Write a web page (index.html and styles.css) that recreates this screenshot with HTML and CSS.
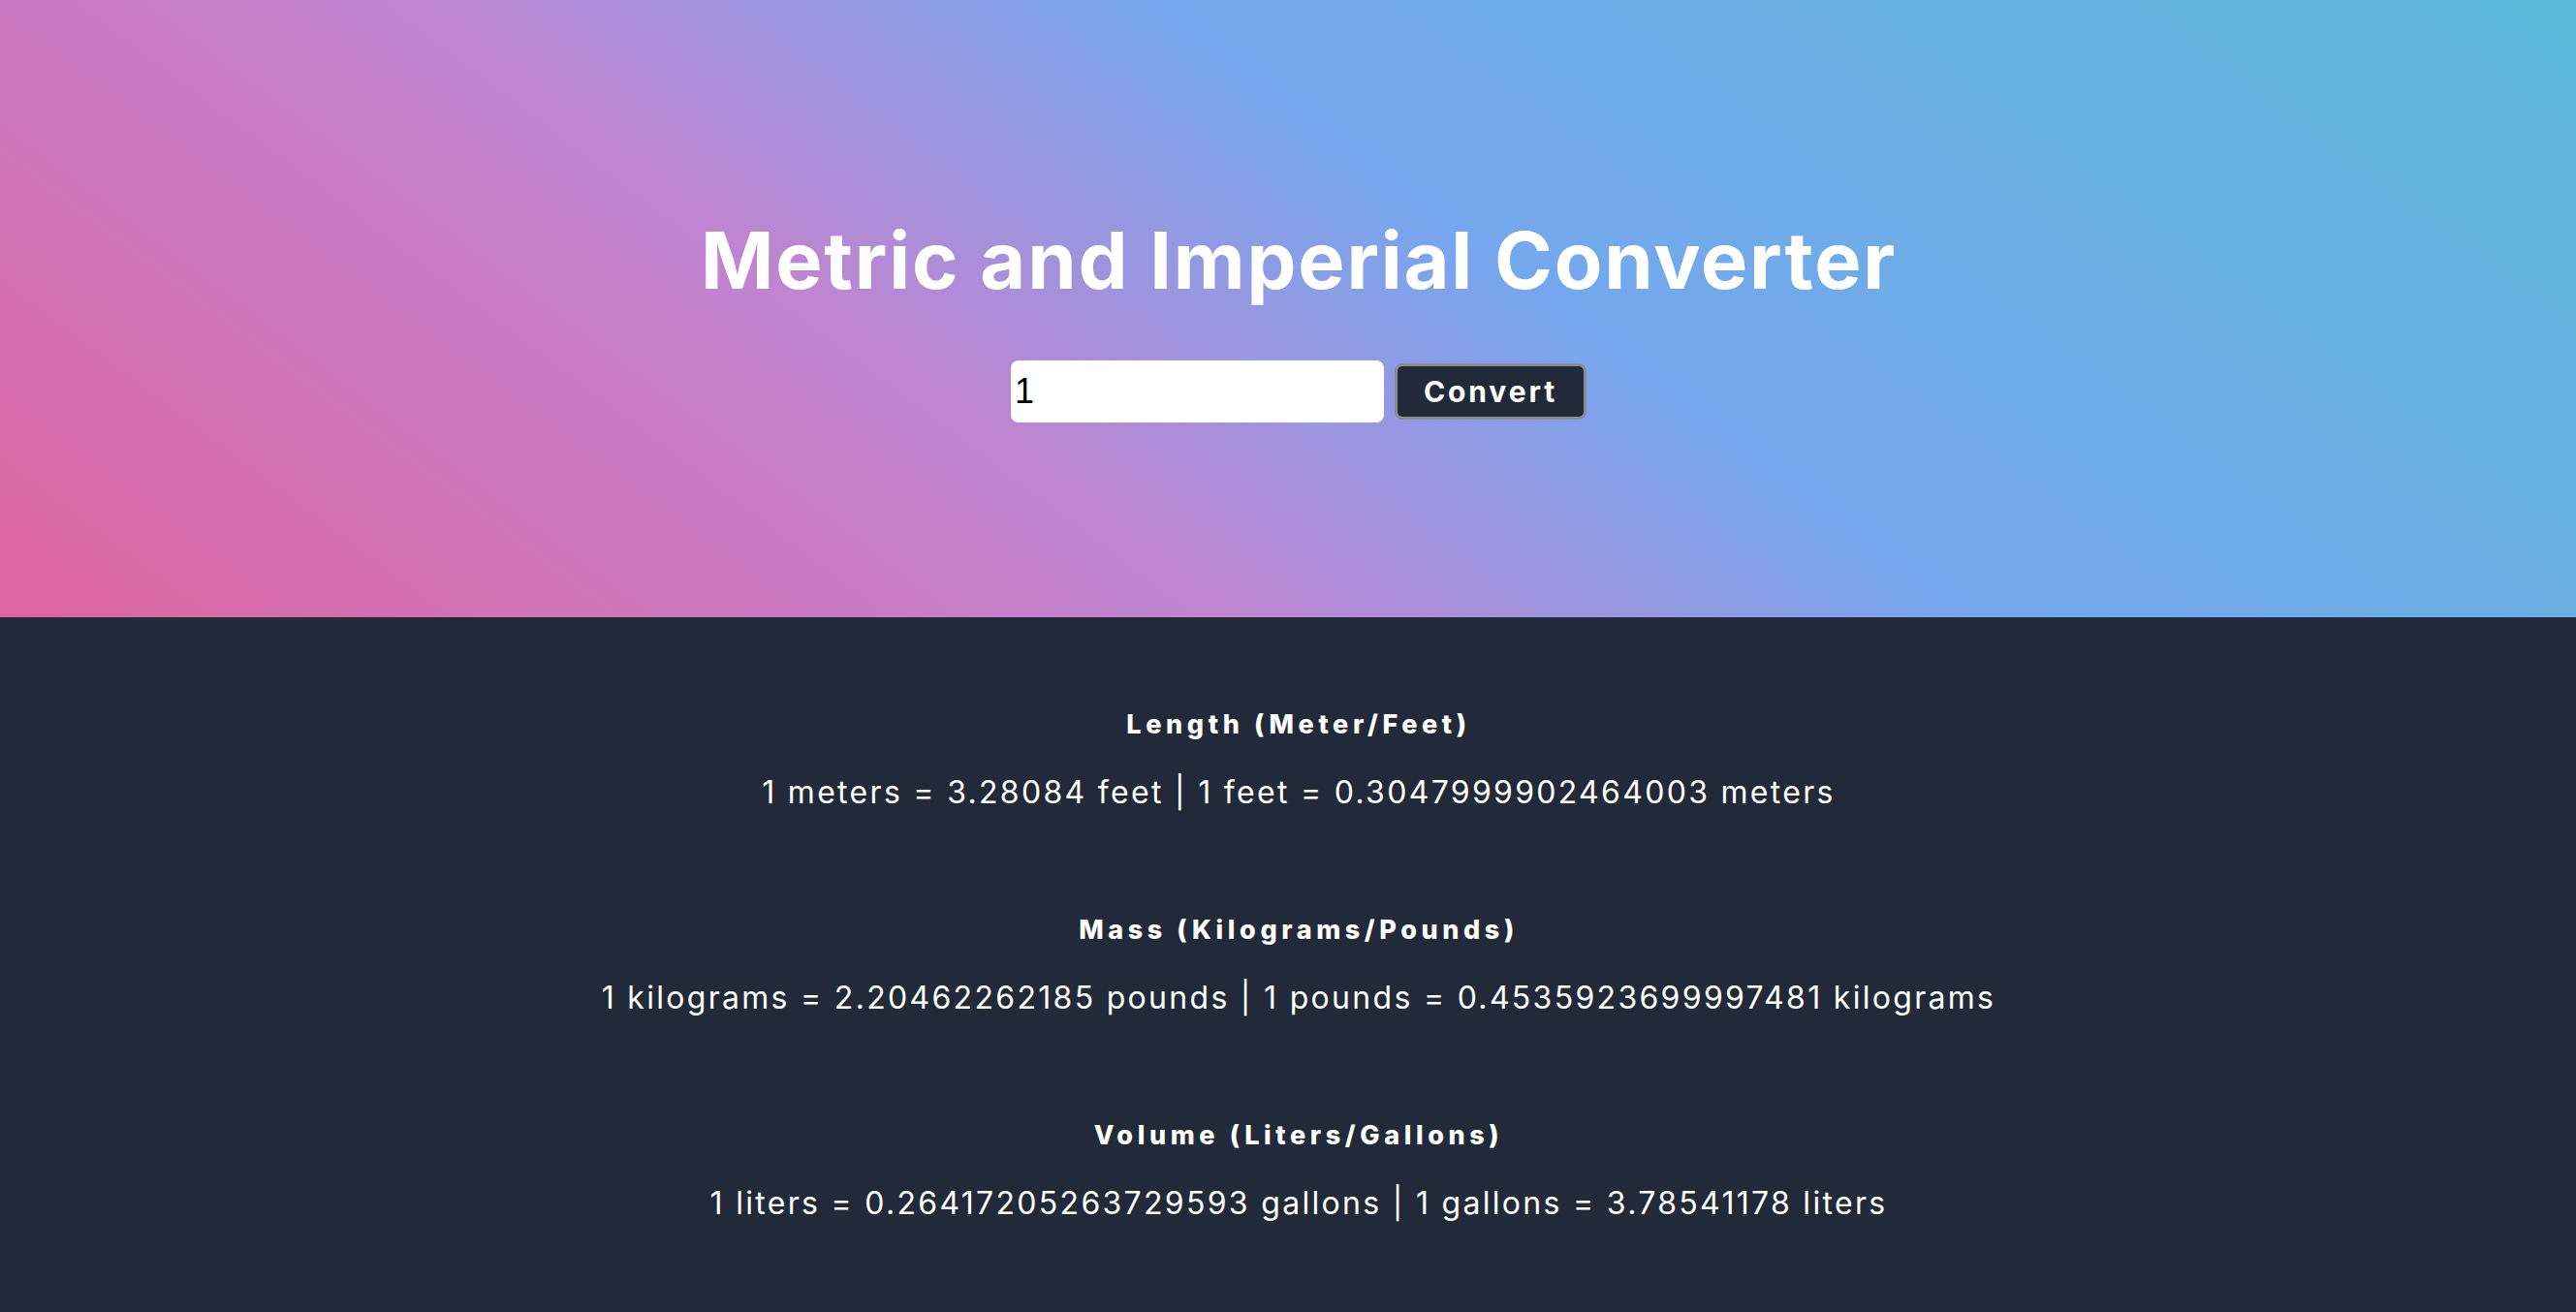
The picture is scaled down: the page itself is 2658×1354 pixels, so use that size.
FILE: index.html
```html
<!DOCTYPE html>
<html lang="en">
<head>
<meta charset="utf-8">
<title>Metric and Imperial Converter</title>
<link rel="stylesheet" href="styles.css">
</head>
<body>
<header class="hero">
  <h1 class="title">Metric and Imperial Converter</h1>
  <form class="convert-form">
    <input class="num-input" type="text" value="1">
    <button class="convert-btn" type="button">Convert</button>
  </form>
</header>
<main class="results">
  <section class="result">
    <h3 class="result-title">Length (Meter/Feet)</h3>
    <p class="result-text">1 meters = 3.28084 feet | 1 feet = 0.3047999902464003 meters</p>
  </section>
  <section class="result">
    <h3 class="result-title">Mass (Kilograms/Pounds)</h3>
    <p class="result-text">1 kilograms = 2.20462262185 pounds | 1 pounds = 0.4535923699997481 kilograms</p>
  </section>
  <section class="result">
    <h3 class="result-title">Volume (Liters/Gallons)</h3>
    <p class="result-text">1 liters = 0.26417205263729593 gallons | 1 gallons = 3.78541178 liters</p>
  </section>
</main>
</body>
</html>
```
FILE: styles.css
```css
html, body {
  margin: 0;
  padding: 0;
}
body {
  background: #222938;
  font-family: Inter, "Noto Sans", sans-serif;
  color: #ffffff;
  min-height: 100vh;
}
.hero {
  height: 637px;
  box-sizing: border-box;
  padding-top: 229px;
  padding-left: 22px;
  display: flex;
  flex-direction: column;
  align-items: center;
  background: linear-gradient(37deg, #de65a0 0%, #c084d0 36%, #76a7ee 58%, #5bb8d6 100%);
}
.title {
  margin: 0;
  font-size: 81px;
  line-height: 1;
  font-weight: 700;
  letter-spacing: 1.8px;
}
.convert-form {
  margin-top: 62px;
  display: flex;
  align-items: center;
  gap: 11px;
}
.num-input {
  width: 385px;
  height: 64px;
  box-sizing: border-box;
  border: none;
  border-radius: 8px;
  padding: 0 4px;
  font-family: "Liberation Sans", Arial, sans-serif;
  font-size: 36px;
  color: #000;
  background: #fff;
  outline: none;
}
.convert-btn {
  width: 198px;
  height: 58px;
  box-sizing: border-box;
  border: 3px solid #8a8d93;
  border-radius: 8px;
  background: #222938;
  color: #fff;
  font-family: Inter, sans-serif;
  font-weight: 700;
  font-size: 30px;
  letter-spacing: 2.9px;
  padding: 0;
}
.results {
  padding: 95px 0 60px 22px;
  display: flex;
  flex-direction: column;
  align-items: center;
  gap: 106px;
}
.result {
  display: flex;
  flex-direction: column;
  align-items: center;
  gap: 35px;
}
.result-title {
  margin: 0;
  font-size: 27px;
  line-height: 1.2;
  font-weight: 800;
  letter-spacing: 4.6px;
}
.result-text {
  margin: 0;
  font-size: 32px;
  line-height: 1.2;
  font-weight: 400;
  letter-spacing: 2.3px;
}
```
